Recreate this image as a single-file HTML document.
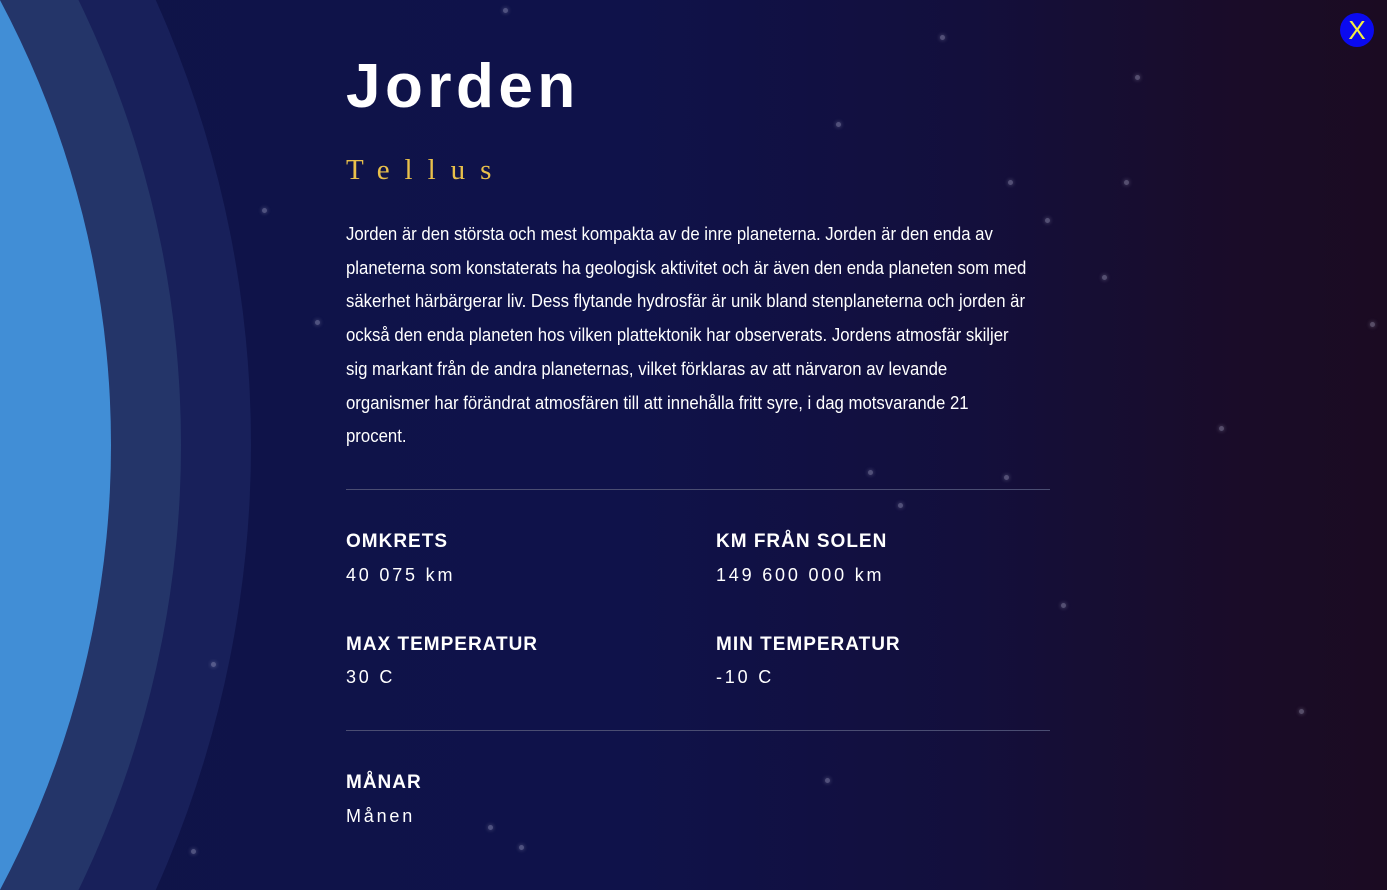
<!DOCTYPE html>
<html><head><meta charset="utf-8"><style>
html,body{margin:0;padding:0;width:1387px;height:890px;overflow:hidden}
body{position:relative;font-family:"Liberation Sans",sans-serif;color:#fff;
background:linear-gradient(90deg,#0f1448 0%,#0f124a 45%,#130f3c 70%,#1a0c28 90%,#1b0b22 100%);}
.wrap{position:absolute;left:0;top:0;width:1387px;height:890px;overflow:hidden}
.c{position:absolute;border-radius:50%}
.star{position:absolute;width:5px;height:5px;border-radius:50%;background:rgba(200,200,230,0.35);box-shadow:0 0 4px rgba(200,200,230,0.4)}
.t{position:absolute;left:346px;white-space:nowrap}
.line{position:absolute;left:346px;font-size:18.5px;white-space:nowrap;transform:scaleX(0.905);transform-origin:0 0;color:#fff}
.lab{position:absolute;font-weight:bold;font-size:19px;letter-spacing:1px}
.val{position:absolute;font-size:18px;letter-spacing:2.8px}
.hr{position:absolute;left:346px;width:704px;height:1px;background:#4a4d72}
</style></head><body><div class="wrap">
<div class="c" style="left:-1923px;top:-642px;width:2174px;height:2174px;background:#18205a"></div>
<div class="c" style="left:-1853px;top:-572px;width:2034px;height:2034px;background:#243569"></div>
<div class="c" style="left:-1783px;top:-502px;width:1894px;height:1894px;background:#418ed6"></div>

<div class="star" style="left:503px;top:8px"></div>
<div class="star" style="left:262px;top:208px"></div>
<div class="star" style="left:315px;top:320px"></div>
<div class="star" style="left:836px;top:122px"></div>
<div class="star" style="left:1135px;top:75px"></div>
<div class="star" style="left:1008px;top:180px"></div>
<div class="star" style="left:1124px;top:180px"></div>
<div class="star" style="left:1045px;top:218px"></div>
<div class="star" style="left:1102px;top:275px"></div>
<div class="star" style="left:1370px;top:322px"></div>
<div class="star" style="left:868px;top:470px"></div>
<div class="star" style="left:1004px;top:475px"></div>
<div class="star" style="left:898px;top:503px"></div>
<div class="star" style="left:1061px;top:603px"></div>
<div class="star" style="left:1219px;top:426px"></div>
<div class="star" style="left:211px;top:662px"></div>
<div class="star" style="left:825px;top:778px"></div>
<div class="star" style="left:1299px;top:709px"></div>
<div class="star" style="left:519px;top:845px"></div>
<div class="star" style="left:191px;top:849px"></div>
<div class="star" style="left:488px;top:825px"></div>
<div class="star" style="left:940px;top:35px"></div>

<div style="position:absolute;left:1340px;top:13px;width:34px;height:34px;border-radius:50%;background:#0a0af0;color:#f4f040;font-size:26px;text-align:center;line-height:34px">X</div>

<div class="t" style="top:51px;font-size:62px;font-weight:bold;letter-spacing:4.5px">Jorden</div>
<div class="t" style="top:154px;font-family:'Liberation Serif',serif;font-size:29px;letter-spacing:15px;color:#e9c04a">Tellus</div>

<div class="line" style="top:223px">Jorden är den största och mest kompakta av de inre planeterna. Jorden är den enda av</div>
<div class="line" style="top:257px">planeterna som konstaterats ha geologisk aktivitet och är även den enda planeten som med</div>
<div class="line" style="top:290px">säkerhet härbärgerar liv. Dess flytande hydrosfär är unik bland stenplaneterna och jorden är</div>
<div class="line" style="top:324px">också den enda planeten hos vilken plattektonik har observerats. Jordens atmosfär skiljer</div>
<div class="line" style="top:358px">sig markant från de andra planeternas, vilket förklaras av att närvaron av levande</div>
<div class="line" style="top:392px">organismer har förändrat atmosfären till att innehålla fritt syre, i dag motsvarande 21</div>
<div class="line" style="top:425px">procent.</div>

<div class="hr" style="top:489px"></div>
<div class="lab" style="left:346px;top:531px">OMKRETS</div>
<div class="val" style="left:346px;top:565px">40 075 km</div>
<div class="lab" style="left:716px;top:531px">KM FRÅN SOLEN</div>
<div class="val" style="left:716px;top:565px">149 600 000 km</div>
<div class="lab" style="left:346px;top:634px">MAX TEMPERATUR</div>
<div class="val" style="left:346px;top:667px">30 C</div>
<div class="lab" style="left:716px;top:634px">MIN TEMPERATUR</div>
<div class="val" style="left:716px;top:667px">-10 C</div>
<div class="hr" style="top:730px"></div>
<div class="lab" style="left:346px;top:772px">MÅNAR</div>
<div class="val" style="left:346px;top:806px">Månen</div>
</div></body></html>
